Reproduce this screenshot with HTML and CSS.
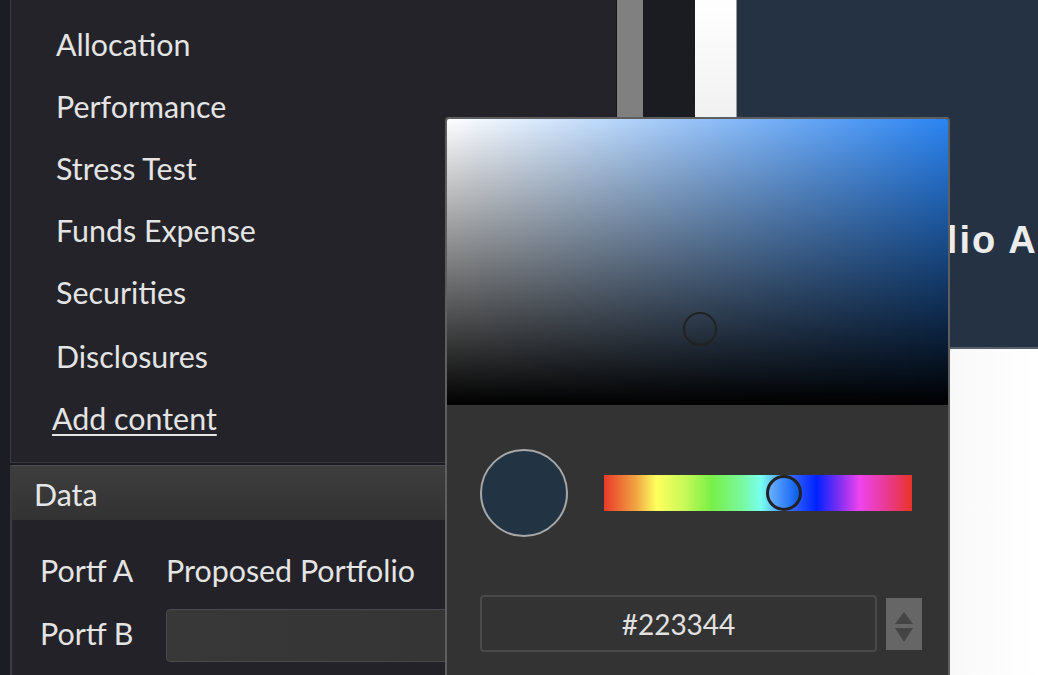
FILE: index.html
```html
<!DOCTYPE html>
<html lang="en">
<head>
<meta charset="utf-8">
<title>Report editor</title>
<link rel="stylesheet" href="styles.css">
</head>
<body>
<div class="app">
  <div class="edge"></div>
  <aside class="sidebar">
    <nav class="nav">
      <div class="nav-item">Allocation</div>
      <div class="nav-item">Performance</div>
      <div class="nav-item">Stress Test</div>
      <div class="nav-item">Funds Expense</div>
      <div class="nav-item">Securities</div>
      <div class="nav-item nav-item-gap">Disclosures</div>
      <a class="nav-item add-link" href="#">Add content</a>
    </nav>
    <section class="data">
      <div class="data-header">Data</div>
      <div class="data-body">
        <div class="data-label">Portf A</div>
        <div class="data-value">Proposed Portfolio</div>
        <div class="data-label">Portf B</div>
        <div class="data-input"></div>
      </div>
    </section>
  </aside>
  <div class="scroll"><div class="thumb"></div></div>
  <div class="gutter"></div>
  <div class="pane"></div>
  <main class="main">
    <header class="main-header"><h1 class="title">Portfolio A</h1></header>
    <div class="main-body"></div>
  </main>
</div>

<div class="picker">
  <div class="sv">
    <div class="sv-marker"></div>
  </div>
  <div class="picker-bottom">
    <div class="picker-row">
      <div class="preview"></div>
      <div class="hue">
        <div class="hue-knob"></div>
      </div>
    </div>
    <div class="hex-row">
      <div class="hex-input">#223344</div>
      <div class="spinner">
        <svg width="18" height="36" viewBox="0 0 18 36">
          <polygon points="9,6 18,18 0,18" fill="#444"/>
          <polygon points="0,22 18,22 9,36" fill="#444"/>
        </svg>
      </div>
    </div>
  </div>
</div>
</body>
</html>
```
FILE: styles.css
```css
html, body {
  margin: 0;
  padding: 0;
  height: 100%;
  overflow: hidden;
}
body {
  background: #1b1b22;
  font-family: Lato, "Open Sans", sans-serif;
  color: #e2e2e2;
}
.app {
  display: flex;
  height: 675px;
  overflow: hidden;
}
.edge {
  width: 10px;
  flex: none;
  background: #1b1c24;
}
.sidebar {
  width: 606px;
  flex: none;
  display: flex;
  flex-direction: column;
  background: #1b1b22;
}
.nav {
  background: #232329;
  border-left: 1px solid #3b3b40;
  border-bottom: 1px solid #3b3b40;
  padding: 13px 0 13px 0;
  display: flex;
  flex-direction: column;
}
.nav-item {
  font-size: 30.4px;
  line-height: 62px;
  height: 62px;
  padding-left: 45px;
  color: #e4e4e4;
}
.nav-item-gap {
  margin-top: 2px;
}
.add-link {
  padding-left: 41px;
  color: #e4e4e4;
  text-decoration: underline;
  text-decoration-thickness: 2px;
  text-underline-offset: 4px;
}
.data {
  margin-top: 2px;
  flex: 1;
  background: #222228;
  border-left: 2px solid #3b3b40;
  display: flex;
  flex-direction: column;
}
.data-header {
  height: 54px;
  line-height: 56px;
  font-size: 30.4px;
  padding-left: 22px;
  border-top: 1px solid #505050;
  background: linear-gradient(to bottom, #3e3e3e, #323232);
  color: #e6e6e6;
}
.data-body {
  display: grid;
  grid-template-columns: 126px 1fr;
  grid-auto-rows: 54px;
  row-gap: 9px;
  padding: 23px 0 0 28px;
  align-items: center;
}
.data-label, .data-value {
  font-size: 30.4px;
  line-height: 54px;
  color: #e4e4e4;
}
.data-input {
  height: 51px;
  width: 430px;
  border: 1px solid #4a4a4a;
  border-radius: 4px;
  background: linear-gradient(to right, #383838, #333);
  margin-top: 4px;
}
.scroll {
  width: 26px;
  flex: none;
  border-left: 1px solid #16161b;
  background: #1b1b22;
}
.thumb {
  height: 100%;
  background: #808080;
}
.gutter {
  width: 52px;
  flex: none;
  background: #1b1b22;
}
.pane {
  width: 41px;
  flex: none;
  background: linear-gradient(to bottom, #ffffff, #f0f0f0 18%, #ebebeb);
  border-right: 1px solid #9a9a9a;
}
.main {
  flex: 1;
  display: flex;
  flex-direction: column;
  min-width: 0;
}
.main-header {
  height: 347px;
  background: #253244;
  border-bottom: 2px solid #5a6068;
  padding-left: 86px;
}
.title {
  margin: 0;
  padding-top: 220px;
  font-family: "Liberation Sans", Arial, sans-serif;
  font-weight: bold;
  font-size: 38px;
  line-height: 40px;
  letter-spacing: 2px;
  color: #ececec;
  white-space: nowrap;
}
.main-body {
  flex: 1;
  background: linear-gradient(to right, #d4d4d4, #f4f4f4 50%, #ffffff);
}

/* colour picker popover */
.picker {
  position: absolute;
  left: 445px;
  top: 117px;
  width: 501px;
  height: 556px;
  border: 2px solid #5e5e5e;
  border-radius: 4px 4px 0 0;
  background: #333333;
  overflow: hidden;
}
.sv {
  position: relative;
  height: 286px;
  background:
    linear-gradient(to bottom, rgba(0,0,0,0), #000),
    linear-gradient(to right, #ffffff, #2a84f2);
}
.sv-marker {
  position: absolute;
  left: 236px;
  top: 193px;
  width: 30px;
  height: 30px;
  border: 2px solid #222;
  border-radius: 50%;
}
.picker-bottom {
  padding: 44px 0 0 33px;
}
.picker-row {
  display: flex;
  align-items: center;
  gap: 36px;
}
.preview {
  width: 84px;
  height: 84px;
  border-radius: 50%;
  background: #223344;
  border: 2px solid #a8a8a8;
}
.hue {
  position: relative;
  width: 308px;
  height: 36px;
  background: linear-gradient(to right,
    #ea3a2a 0%, #f0a040 10%, #ffff5e 17%, #c8f858 26%, #78f048 35%,
    #78f8a0 45%, #78fff0 51%, #3a70ff 60%, #0022ff 69%, #8a30f0 77%,
    #ee44ee 83%, #e83a90 92%, #ea3428 100%);
}
.hue-knob {
  position: absolute;
  left: 162px;
  top: 0;
  width: 30px;
  height: 30px;
  border: 3px solid #222;
  border-radius: 50%;
  background: linear-gradient(to right, #6ab0ff, #0a5cf0);
}
.hex-row {
  display: flex;
  align-items: center;
  gap: 9px;
  margin-top: 58px;
}
.hex-input {
  width: 393px;
  height: 53px;
  border: 2px solid #4a4a4a;
  border-radius: 4px;
  font-size: 28px;
  line-height: 55px;
  text-align: center;
  color: #e2e2e2;
}
.spinner {
  width: 36px;
  height: 52px;
  background: #666666;
  display: flex;
  align-items: center;
  justify-content: center;
}
```
